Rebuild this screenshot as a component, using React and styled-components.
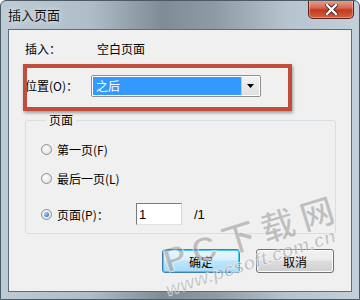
import React from "react";
import styled, { createGlobalStyle } from "styled-components";

const GlobalStyle = createGlobalStyle`
  html, body {
    margin: 0;
    padding: 0;
    background: #ffffff;
  }
  body {
    font-family: "Noto Sans CJK SC", "Liberation Sans", sans-serif;
    font-size: 12px;
    color: #000;
  }
`;

const Window = styled.div`
  position: relative;
  width: 360px;
  height: 300px;
  box-sizing: border-box;
  display: flex;
  flex-direction: column;
  padding: 0 7px 7px 7px;
  border: 1px solid #4c5a66;
  border-radius: 6px 6px 0 0;
  background: linear-gradient(
    90deg,
    #bccbd6 0%,
    #aebdc8 25%,
    #7f8c96 45%,
    #8f9ba4 60%,
    #b6c4cf 80%,
    #c3d0da 100%
  );
  overflow: hidden;
`;

const TitleBar = styled.div`
  height: 28px;
  display: flex;
  justify-content: space-between;
  align-items: flex-start;
  flex-shrink: 0;
`;

const Title = styled.div`
  margin-top: 6px;
  font-size: 13px;
  line-height: 16px;
  color: #111;
  text-shadow: 0 0 6px rgba(255, 255, 255, 0.9);
`;

const CloseButton = styled.div`
  width: 46px;
  height: 19px;
  margin-top: -1px;
  margin-right: -2px;
  box-sizing: border-box;
  border: 1px solid #5a2019;
  border-top: none;
  border-radius: 0 0 5px 5px;
  background: linear-gradient(180deg, #e8a593 0%, #d7644d 45%, #c23a22 55%, #d4603f 100%);
  box-shadow: inset 0 0 0 1px rgba(255, 255, 255, 0.35);
  display: flex;
  align-items: center;
  justify-content: center;
`;

const Client = styled.div`
  flex: 1;
  display: flex;
  flex-direction: column;
  padding: 12px 16px 0 16px;
  background: #f0f0f0;
  border: 1px solid #5e6c78;
  box-sizing: border-box;
`;

const Row = styled.div`
  display: flex;
  align-items: center;
  height: ${(p) => p.$h || 14}px;
  margin-top: ${(p) => p.$mt || 0}px;
  line-height: 14px;
`;

const Label = styled.span`
  display: inline-block;
  width: ${(p) => p.$w}px;
  flex-shrink: 0;
`;

const Combo = styled.div`
  width: 170px;
  height: 22px;
  box-sizing: border-box;
  border: 1px solid #8e8f8f;
  border-radius: 2px;
  background: #fff;
  display: flex;
  padding: 1px;
`;

const ComboValue = styled.div`
  flex: 1;
  background: #3399ff;
  color: #fff;
  padding-left: 3px;
  display: flex;
  align-items: center;
`;

const ComboArrow = styled.div`
  width: 17px;
  display: flex;
  align-items: center;
  justify-content: center;
  background: linear-gradient(180deg, #f2f2f2, #e0e0e0);
  border-left: 1px solid #c9c9c9;
`;

const Group = styled.fieldset`
  margin: 16px 0 0 0;
  width: 311px;
  box-sizing: border-box;
  border: 1px solid #d5dfe5;
  border-radius: 3px;
  padding: 0 0 8px 15px;
`;

const Legend = styled.legend`
  padding: 0 3px;
  margin-left: 5px;
  line-height: 14px;
  font-size: 12px;
`;

const RadioRow = styled.label`
  display: flex;
  align-items: center;
  height: ${(p) => p.$h || 20}px;
  margin-top: ${(p) => p.$mt}px;
`;

const Radio = styled.span`
  width: 11px;
  height: 11px;
  border-radius: 50%;
  box-sizing: border-box;
  border: 1px solid #8f8f8f;
  background: radial-gradient(circle at 40% 40%, #ffffff, #d9d9d9);
  margin-right: 5px;
  display: flex;
  align-items: center;
  justify-content: center;
  flex-shrink: 0;

  &::after {
    content: "";
    display: ${(p) => (p.$checked ? "block" : "none")};
    width: 5px;
    height: 5px;
    border-radius: 50%;
    background: radial-gradient(circle at 35% 35%, #9fd4ff, #1c5fa8);
  }
`;

const PageInput = styled.div`
  width: 46px;
  height: 22px;
  box-sizing: border-box;
  border: 1px solid #7b7b7b;
  border-right-color: #d8d8d8;
  border-bottom-color: #e3e3e3;
  background: #fff;
  padding-left: 2px;
  display: flex;
  align-items: center;
  font-family: "Liberation Sans", sans-serif;
  font-size: 13px;
`;

const Total = styled.span`
  margin-left: 12px;
  font-family: "Liberation Sans", sans-serif;
  font-size: 13px;
`;

const Buttons = styled.div`
  display: flex;
  justify-content: flex-end;
  gap: 16px;
  margin-top: 15px;
  padding-right: 1px;
`;

const Button = styled.div`
  width: 78px;
  height: 24px;
  box-sizing: border-box;
  border-radius: 3px;
  border: 1px solid ${(p) => (p.$default ? "#3c7fb1" : "#707070")};
  background: ${(p) =>
    p.$default
      ? "linear-gradient(180deg, #eaf6fd 0%, #d9f0fc 45%, #bee6fd 50%, #a7d9f5 100%)"
      : "linear-gradient(180deg, #f2f2f2 0%, #ebebeb 45%, #dddddd 50%, #cfcfcf 100%)"};
  box-shadow: inset 0 0 0 1px ${(p) => (p.$default ? "#48c8f5" : "#fcfcfc")};
  display: flex;
  align-items: center;
  justify-content: center;
`;

const Annotation = styled.div`
  position: absolute;
  left: 22px;
  top: 63px;
  width: 269px;
  height: 47px;
  box-sizing: border-box;
  border: 4px solid #bf4f3c;
  box-shadow: 1px 2px 3px rgba(0, 0, 0, 0.35);
  pointer-events: none;
`;

const Watermark = styled.div`
  position: absolute;
  left: ${(p) => p.$x}px;
  top: ${(p) => p.$y}px;
  transform: rotate(${(p) => p.$rot}deg);
  transform-origin: left top;
  white-space: nowrap;
  line-height: 1;
  font-family: "Liberation Sans", "Noto Sans CJK SC", sans-serif;
  font-size: ${(p) => p.$size}px;
  font-weight: bold;
  font-style: ${(p) => (p.$italic ? "italic" : "normal")};
  letter-spacing: ${(p) => p.$ls || 0}px;
  color: rgba(140, 140, 140, 0.5);
  -webkit-text-stroke: 1px rgba(255, 255, 255, 0.6);
  pointer-events: none;
`;

export default function App() {
  return (
    <>
      <GlobalStyle />
      <Window>
        <TitleBar>
          <Title>插入页面</Title>
          <CloseButton>
            <svg width="13" height="11" viewBox="0 0 13 11">
              <path
                d="M2 1 L11 10 M11 1 L2 10"
                stroke="#3a1a14"
                strokeWidth="4"
                strokeLinecap="square"
              />
              <path
                d="M2 1 L11 10 M11 1 L2 10"
                stroke="#ffffff"
                strokeWidth="2.4"
                strokeLinecap="square"
              />
            </svg>
          </CloseButton>
        </TitleBar>
        <Client>
          <Row>
            <Label $w={72}>插入：</Label>
            <span>空白页面</span>
          </Row>
          <Row $h={22} $mt={19}>
            <Label $w={66}>位置(O)：</Label>
            <Combo>
              <ComboValue>之后</ComboValue>
              <ComboArrow>
                <svg width="7" height="4" viewBox="0 0 7 4">
                  <path d="M0 0 H7 L3.5 4 Z" fill="#000" />
                </svg>
              </ComboArrow>
            </Combo>
          </Row>
          <Group>
            <Legend>页面</Legend>
            <RadioRow $mt={12}>
              <Radio />
              第一页(F)
            </RadioRow>
            <RadioRow $mt={9}>
              <Radio />
              最后一页(L)
            </RadioRow>
            <RadioRow $mt={15} $h={22}>
              <Radio $checked />
              <Label $w={79}>页面(P)：</Label>
              <PageInput>1</PageInput>
              <Total>/1</Total>
            </RadioRow>
          </Group>
          <Buttons>
            <Button $default>确定</Button>
            <Button>取消</Button>
          </Buttons>
        </Client>
        <Annotation />
        <Watermark $x={158} $y={244} $size={34} $ls={7} $rot={-17}>
          PC下载网
        </Watermark>
        <Watermark $x={162} $y={280} $size={19} $rot={-18} $italic>
          www.pcsoft.com.cn
        </Watermark>
      </Window>
    </>
  );
}
